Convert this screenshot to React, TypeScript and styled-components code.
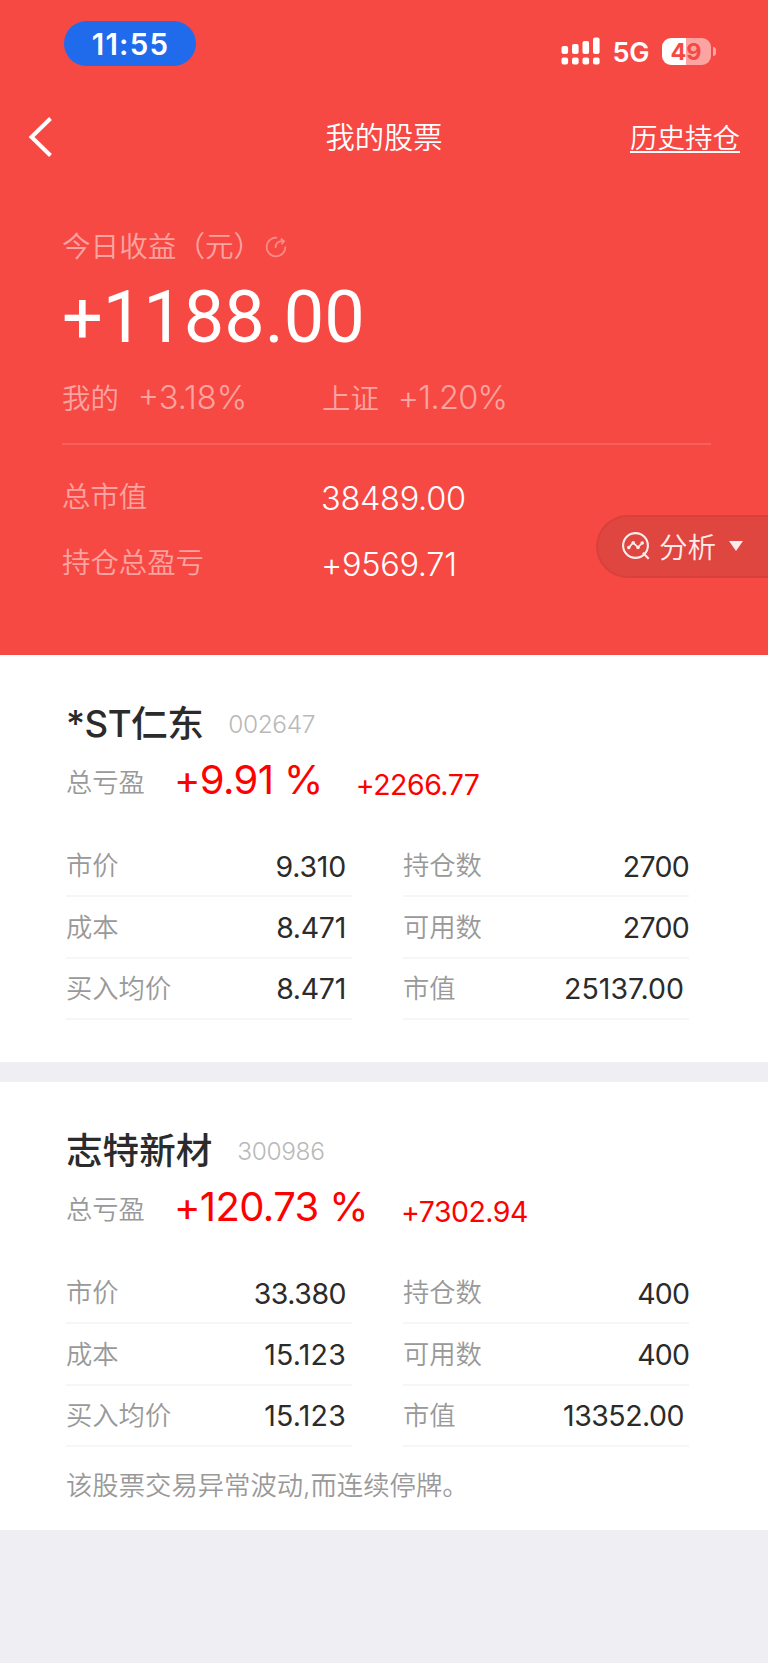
import styled, { createGlobalStyle } from 'styled-components';

type Metric = {
	label: string;
	value: string;
	inset?: number;
	spacing?: number;
};

type Stock = {
	name: string;
	nameSpacing?: number;
	code: string;
	percent: string;
	amount: string;
	left: Metric[];
	right: Metric[];
	note?: string;
};

const stocks: Stock[] = [
	{
		name: '*ST仁东',
		nameSpacing: -0.5,
		code: '002647',
		percent: '+9.91 %',
		amount: '+2266.77',
		left: [
			{ label: '市价', value: '9.310', inset: 6, spacing: -0.2 },
			{ label: '成本', value: '8.471', inset: 6, spacing: -0.3 },
			{ label: '买入均价', value: '8.471', inset: 6, spacing: -0.3 },
		],
		right: [
			{ label: '持仓数', value: '2700', spacing: -0.7 },
			{ label: '可用数', value: '2700', spacing: -0.7 },
			{ label: '市值', value: '25137.00', inset: 5, spacing: 0 },
		],
	},
	{
		name: '志特新材',
		code: '300986',
		percent: '+120.73 %',
		amount: '+7302.94',
		left: [
			{ label: '市价', value: '33.380', inset: 6 },
			{ label: '成本', value: '15.123', inset: 6, spacing: 0.2 },
			{ label: '买入均价', value: '15.123', inset: 6, spacing: 0.2 },
		],
		right: [
			{ label: '持仓数', value: '400', spacing: -0.9 },
			{ label: '可用数', value: '400', spacing: -0.9 },
			{ label: '市值', value: '13352.00', inset: 5 },
		],
		note: '该股票交易异常波动,而连续停牌。',
	},
];

const GlobalStyle = createGlobalStyle`
	* {
		box-sizing: border-box;
	}

	body {
		margin: 0;
		background: #efeef3;
		font-family: Inter, 'Noto Sans CJK SC', sans-serif;
		font-weight: 350;
		white-space: nowrap;
	}
`;

const Page = styled.div`
	width: 768px;
	min-height: 1663px;
	background: #efeef3;
`;

const Header = styled.header`
	position: relative;
	height: 655px;
	background: #f74944;
	color: #fff;
`;

const StatusBar = styled.div`
	display: flex;
	justify-content: space-between;
	height: 88px;
	padding: 21px 52px 0 64px;
`;

const Clock = styled.div`
	width: 132px;
	height: 45px;
	padding-left: 1px;
	border-radius: 23px;
	background: #206bec;
	font-size: 29.5px;
	font-weight: 600;
	line-height: 47px;
	text-align: center;
	letter-spacing: 1.2px;
`;

const StatusIcons = styled.div`
	display: flex;
	align-items: center;
	height: 60px;
`;

const Network = styled.span`
	margin: 2px 13px 0 12px;
	font-size: 27px;
	font-weight: 600;
	line-height: 1;
	letter-spacing: -0.4px;
`;

const Battery = styled.div`
	display: flex;
	align-items: center;
	gap: 2px;
`;

const BatteryBody = styled.div<{ $level: number }>`
	width: 49px;
	height: 27px;
	padding-right: 1px;
	border-radius: 9px;
	background: linear-gradient(to right, #fff ${({ $level }) => $level}%, #fba4a1 ${({ $level }) => $level}%);
	color: #f74944;
	font-size: 23.5px;
	font-weight: 700;
	line-height: 28px;
	text-align: center;
`;

const BatteryTip = styled.i`
	width: 3px;
	height: 9px;
	border-radius: 0 4px 4px 0;
	background: #fba4a1;
`;

const NavBar = styled.nav`
	display: grid;
	grid-template-columns: 1fr auto 1fr;
	align-items: center;
	height: 97px;
	padding: 0 28px;
`;

const Title = styled.h1`
	margin: 2px 0 0;
	font-size: 29.3px;
	font-weight: 350;
	line-height: 1.4;
`;

const HistoryLink = styled.span`
	justify-self: end;
	height: 33px;
	border-bottom: 2px solid #fff;
	font-size: 27.5px;
	line-height: 37px;
`;

const Summary = styled.section`
	padding: 34px 57px 0 62px;
`;

const Caption = styled.div`
	display: flex;
	align-items: center;
	height: 50px;
	color: rgba(255, 255, 255, 0.5);
	font-size: 28.6px;

	svg {
		margin: 6px 0 0 3px;
		opacity: 0.75;
	}
`;

const TodayGain = styled.div`
	height: 92px;
	font-family: Roboto, 'Liberation Sans', sans-serif;
	font-size: 72px;
	font-weight: 400;
	line-height: 97px;
`;

const Rates = styled.div`
	display: grid;
	grid-template-columns: 260px 1fr;
	align-items: center;
	height: 70px;
	color: rgba(255, 255, 255, 0.5);
	font-size: 28.4px;
`;

const Rate = styled.span<{ $spacing?: number }>`
	margin-left: 19px;
	font-size: 32.5px;
	letter-spacing: ${({ $spacing = 0 }) => $spacing}px;
`;

const Divider = styled.hr`
	height: 2px;
	margin: 12px 0 17px;
	border: 0;
	background: rgba(255, 255, 255, 0.13);
`;

const TotalRow = styled.div`
	display: grid;
	grid-template-columns: 259px 1fr;
	align-items: center;
	height: 65.5px;
	color: rgba(255, 255, 255, 0.5);
	font-size: 28.4px;
`;

const TotalValue = styled.span`
	padding-top: 8px;
	color: #fff;
	font-size: 32.5px;
	letter-spacing: -0.3px;
`;

const Analysis = styled.button`
	position: absolute;
	top: 515px;
	right: 0;
	display: flex;
	align-items: center;
	gap: 9px;
	width: 172px;
	height: 63px;
	padding: 0 0 2px 24px;
	border: 2px solid #d9403c;
	border-right: 0;
	border-radius: 32px 0 0 32px;
	background: #df463f;
	color: #fdeceb;
	font: inherit;
	font-size: 28.6px;
`;

const Caret = styled.i`
	margin-left: 4px;
	border: 7px solid transparent;
	border-top: 10px solid #fdeceb;
	border-bottom: 0;
`;

const Card = styled.article`
	padding: 44px 79px 0 66px;
	height: 407px;
	background: #fff;

	& + & {
		height: 448px;
		margin-top: 20px;
	}
`;

const CardHead = styled.div`
	display: flex;
	align-items: center;
	height: 50px;
`;

const Name = styled.h2<{ $spacing?: number }>`
	margin: 0;
	color: #2b2b2b;
	font-size: 36.6px;
	font-weight: 500;
	line-height: 50px;
	letter-spacing: ${({ $spacing = 0 }) => $spacing}px;
`;

const Code = styled.span`
	margin-left: 25px;
	color: #b9b9b9;
	font-size: 24.5px;
	letter-spacing: -0.4px;
`;

const GainRow = styled.div`
	display: flex;
	align-items: center;
	height: 62px;
	color: #fe0000;
`;

const Label = styled.span`
	margin-top: 1px;
	color: #999;
	font-size: 26.3px;
	line-height: 36px;

	${GainRow} & {
		margin-top: 5px;
	}
`;

const Percent = styled.span`
	margin-left: 29px;
	font-size: 40px;
	font-weight: 400;
	line-height: 50px;
	letter-spacing: -0.6px;
`;

const Amount = styled.span`
	margin: 9px 0 0 33px;
	font-size: 28.5px;
	font-weight: 400;
	letter-spacing: -0.5px;
`;

const Metrics = styled.div`
	display: grid;
	grid-template-columns: 286px 286px;
	column-gap: 51px;
	margin-top: 25px;
`;

const MetricRow = styled.div`
	display: flex;
	align-items: center;
	justify-content: space-between;
	height: 61.4px;
	border-bottom: 2px solid #f6f6f6;
`;

const Value = styled.span<{ $inset: number; $spacing: number }>`
	margin-top: 1px;
	padding-right: ${({ $inset }) => $inset}px;
	color: #2b2b2b;
	font-size: 28.5px;
	font-weight: 400;
	letter-spacing: ${({ $spacing }) => $spacing}px;
`;

const Note = styled.p`
	margin: 0;
	color: #999;
	font-size: 26.35px;
	line-height: 76px;
`;

const SignalIcon = () => (
	<svg width="40" height="28" viewBox="0 0 40 28" fill="#fff">
		<rect x="0.5" y="9" width="6.6" height="8" rx="2" />
		<rect x="11" y="7" width="6.6" height="10" rx="2" />
		<rect x="21.5" y="4" width="6.6" height="13" rx="2" />
		<rect x="32" y="0.5" width="6.6" height="16.5" rx="2" />
		{[0.5, 11, 21.5, 32].map((x) => (
			<rect key={x} x={x} y="20.5" width="6.6" height="7" rx="2" />
		))}
	</svg>
);

const BackIcon = () => (
	<svg width="24" height="40" viewBox="0 0 24 40" fill="none" stroke="#fff" strokeWidth="4">
		<path d="M22.5 1.5 3.5 20l19 18.5" />
	</svg>
);

const RefreshIcon = () => (
	<svg width="22" height="22" viewBox="0 0 22 22" fill="none" stroke="currentColor" strokeWidth="1.7">
		<path d="M12 1.6A9.4 9.4 0 1 0 20.4 10.5" />
		<path d="M10.5 12c0-4 2-6.5 6-6.8h2.5M15.8 2.6l3.3 2.6-2.6 3" />
	</svg>
);

const AnalysisIcon = () => (
	<svg width="28" height="28" viewBox="0 0 28 28" fill="none" stroke="currentColor" strokeWidth="2.1">
		<circle cx="13.5" cy="13.5" r="12.4" />
		<path d="M20.8 20.8l5.9 5.9" />
		<path d="M6.8 15.6 11.2 10.8 16 15.4 20.2 11" strokeWidth="1.7" />
		<g fill="currentColor" stroke="none">
			<circle cx="6.8" cy="15.6" r="1.8" />
			<circle cx="11.2" cy="10.8" r="1.8" />
			<circle cx="16" cy="15.4" r="1.8" />
			<circle cx="20.2" cy="11" r="1.8" />
		</g>
	</svg>
);

const MetricColumn = ({ items }: { items: Metric[] }) => (
	<div>
		{items.map(({ label, value, inset = 0, spacing = -0.5 }) => (
			<MetricRow key={label}>
				<Label>{label}</Label>
				<Value $inset={inset} $spacing={spacing}>{value}</Value>
			</MetricRow>
		))}
	</div>
);

const StockCard = ({ stock }: { stock: Stock }) => (
	<Card>
		<CardHead>
			<Name $spacing={stock.nameSpacing}>{stock.name}</Name>
			<Code>{stock.code}</Code>
		</CardHead>
		<GainRow>
			<Label>总亏盈</Label>
			<Percent>{stock.percent}</Percent>
			<Amount>{stock.amount}</Amount>
		</GainRow>
		<Metrics>
			<MetricColumn items={stock.left} />
			<MetricColumn items={stock.right} />
		</Metrics>
		{stock.note && <Note>{stock.note}</Note>}
	</Card>
);

export default function App() {
	return (
		<Page>
			<GlobalStyle />
			<Header>
				<StatusBar>
					<Clock>11:55</Clock>
					<StatusIcons>
						<SignalIcon />
						<Network>5G</Network>
						<Battery>
							<BatteryBody $level={49}>49</BatteryBody>
							<BatteryTip />
						</Battery>
					</StatusIcons>
				</StatusBar>
				<NavBar>
					<BackIcon />
					<Title>我的股票</Title>
					<HistoryLink>历史持仓</HistoryLink>
				</NavBar>
				<Summary>
					<Caption>
						今日收益（元）
						<RefreshIcon />
					</Caption>
					<TodayGain>+1188.00</TodayGain>
					<Rates>
						<div>我的<Rate>+3.18%</Rate></div>
						<div>上证<Rate $spacing={-0.7}>+1.20%</Rate></div>
					</Rates>
					<Divider />
					<TotalRow>
						总市值
						<TotalValue>38489.00</TotalValue>
					</TotalRow>
					<TotalRow>
						持仓总盈亏
						<TotalValue>+9569.71</TotalValue>
					</TotalRow>
				</Summary>
				<Analysis>
					<AnalysisIcon />
					<span>分析</span>
					<Caret />
				</Analysis>
			</Header>
			{stocks.map((stock) => (
				<StockCard key={stock.code} stock={stock} />
			))}
		</Page>
	);
}
